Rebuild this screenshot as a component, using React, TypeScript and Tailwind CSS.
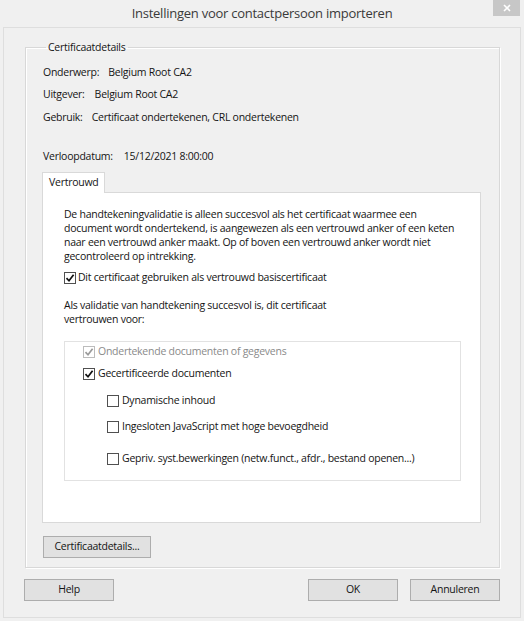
import React from "react";

function Check({ checked = false, disabled = false }: { checked?: boolean; disabled?: boolean }) {
  return (
    <span
      className={
        "inline-flex w-[12px] h-[12px] shrink-0 items-center justify-center border bg-white " +
        (disabled ? "border-[#bcbcbc]" : "border-[#505050]")
      }
    >
      {checked && (
        <svg width="10" height="10" viewBox="0 0 10 10">
          <path
            d="M1.5 5.2 L4 7.8 L8.6 1.8"
            fill="none"
            stroke={disabled ? "#9a9a9a" : "#111111"}
            strokeWidth="1.7"
          />
        </svg>
      )}
    </span>
  );
}

function Btn({ children, w }: { children: React.ReactNode; w: string }) {
  return (
    <div
      className={
        "h-[22px] flex items-center justify-center border border-[#adadad] bg-[#e1e1e1] text-[#141414] " + w
      }
    >
      {children}
    </div>
  );
}

export default function App() {
  return (
    <div
      className="w-[524px] h-[621px] bg-[#f0f0f0] flex flex-col text-[10.5px] tracking-[-0.25px] text-[#141414] overflow-hidden"
      style={{ fontFamily: '"Open Sans", "Noto Sans", sans-serif' }}
    >
      {/* Title bar */}
      <div className="h-[27px] grid grid-cols-[1fr_auto_1fr] shrink-0">
        <div />
        <div className="text-[13px] leading-[26px] text-[#3a3a3a]">
          Instellingen voor contactpersoon importeren
        </div>
        <div className="flex justify-end items-start pr-[4px]">
          <div className="w-[27px] h-[16px] bg-[#c7c7c7] flex items-center justify-center">
            <svg width="8" height="8" viewBox="0 0 8 8">
              <path d="M1 1 L7 7 M7 1 L1 7" stroke="#ffffff" strokeWidth="1.6" />
            </svg>
          </div>
        </div>
      </div>

      {/* Outer panel */}
      <div className="flex-1 mx-[3px] mb-[3px] border border-[#dedede] pl-[21px] pt-[11px] flex flex-col">
        <fieldset className="w-[475px] border border-[#d8d8d8] shadow-[inset_1px_1px_0_#ffffff,1px_1px_0_#ffffff] pl-[16px] pb-[9px] flex flex-col">
          <legend className="ml-[4px] px-[2px] leading-[16px]">Certificaatdetails</legend>
          <div className="ml-[1px] mt-[9px] leading-[16px] flex">
            <span>Onderwerp:</span>
            <span className="ml-[9px]">Belgium Root CA2</span>
          </div>
          <div className="ml-[1px] mt-[6px] leading-[16px] flex">
            <span>Uitgever:</span>
            <span className="ml-[10px]">Belgium Root CA2</span>
          </div>
          <div className="ml-[1px] mt-[7px] leading-[16px] flex">
            <span>Gebruik:</span>
            <span className="ml-[9px]">Certificaat ondertekenen, CRL ondertekenen</span>
          </div>
          <div className="ml-[1px] mt-[23px] leading-[16px] flex">
            <span>Verloopdatum:</span>
            <span className="ml-[11px]">15/12/2021 8:00:00</span>
          </div>

          {/* Tab */}
          <div className="mt-[8px] flex">
            <div className="relative z-10 -mb-px w-[63px] h-[21px] border border-b-0 border-[#d9d9d9] bg-white pl-[6px] leading-[19px]">
              Vertrouwd
            </div>
          </div>
          <div className="w-[439px] h-[331px] border border-[#d9d9d9] bg-white pl-[21px] pt-[14px] flex flex-col">
            <p className="leading-[14px] whitespace-nowrap">
              De handtekeningvalidatie is alleen succesvol als het certificaat waarmee een
              <br />
              document wordt ondertekend, is aangewezen als een vertrouwd anker of een keten
              <br />
              naar een vertrouwd anker maakt. Op of boven een vertrouwd anker wordt niet
              <br />
              gecontroleerd op intrekking.
            </p>
            <div className="mt-[7px] h-[16px] flex items-center gap-[2px]">
              <Check checked />
              <span>Dit certificaat gebruiken als vertrouwd basiscertificaat</span>
            </div>
            <p className="mt-[12px] leading-[14px]">
              Als validatie van handtekening succesvol is, dit certificaat
              <br />
              vertrouwen voor:
            </p>
            <div className="mt-[15px] w-[397px] h-[140px] border border-[#e2e2e2] pl-[18px] pt-[2px] flex flex-col">
              <div className="h-[16px] flex items-center gap-[3px] text-[#8a8a8a]">
                <Check checked disabled />
                <span>Ondertekende documenten of gegevens</span>
              </div>
              <div className="mt-[6px] h-[16px] flex items-center gap-[3px]">
                <Check checked />
                <span>Gecertificeerde documenten</span>
              </div>
              <div className="mt-[11px] ml-[24px] h-[16px] flex items-center gap-[3px]">
                <Check />
                <span>Dynamische inhoud</span>
              </div>
              <div className="mt-[10px] ml-[24px] h-[16px] flex items-center gap-[3px]">
                <Check />
                <span>Ingesloten JavaScript met hoge bevoegdheid</span>
              </div>
              <div className="mt-[16px] ml-[24px] h-[16px] flex items-center gap-[3px]">
                <Check />
                <span>Gepriv. syst.bewerkingen (netw.funct., afdr., bestand openen...)</span>
              </div>
            </div>
          </div>

          <div className="mt-[13px] ml-[1px] flex">
            <Btn w="w-[108px]">Certificaatdetails...</Btn>
          </div>
        </fieldset>

        <div className="mt-[11px] -ml-[1px] w-[476px] flex">
          <Btn w="w-[90px]">Help</Btn>
          <div className="flex-1" />
          <Btn w="w-[90px]">OK</Btn>
          <div className="w-[12px]" />
          <Btn w="w-[90px]">Annuleren</Btn>
        </div>
      </div>
    </div>
  );
}
